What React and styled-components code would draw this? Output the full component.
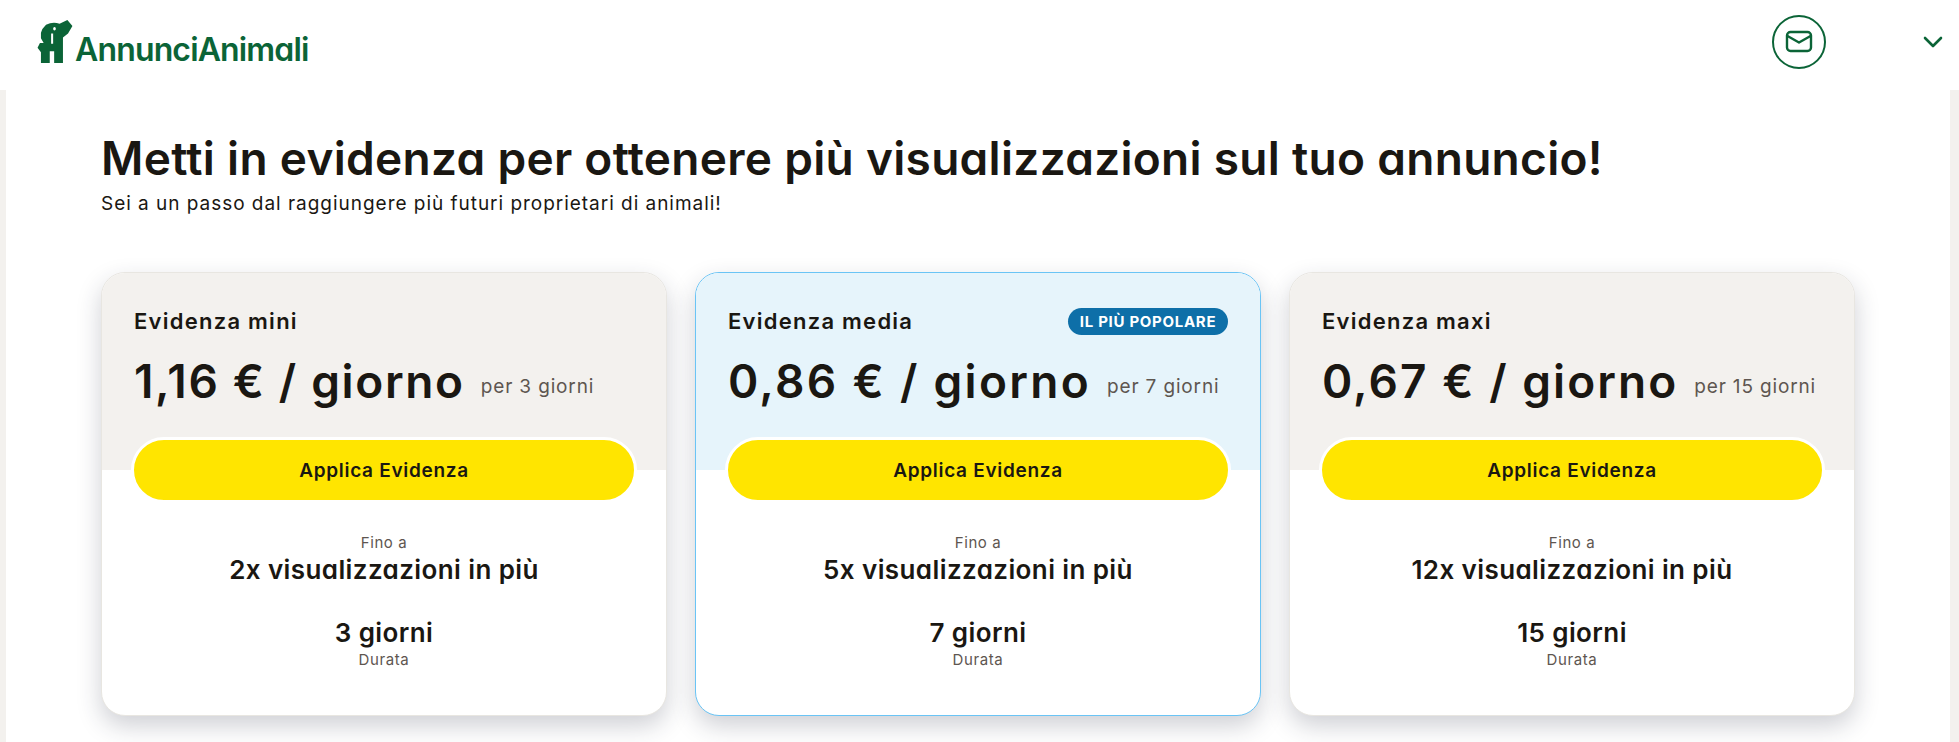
import React from "react";
import styled, { createGlobalStyle } from "styled-components";

const Global = createGlobalStyle`
  html, body { margin: 0; padding: 0; background: #f3f1ee; }
  body { font-family: Inter, "Liberation Sans", sans-serif; color: #1a1712; }
  * { box-sizing: border-box; }
`;
const Page = styled.div`
  height: 742px;
  overflow: hidden;
  background: #f3f1ee;
`;
const Header = styled.header`
  height: 90px;
  background: #fff;
  display: flex;
  align-items: center;
  padding: 0 15px 0 37px;
`;
const Logo = styled.div`
  display: flex;
  align-items: flex-end;
  gap: 2px;
  margin-top: -6px;
`;
const LogoMark = styled.svg`
  display: block;
  width: 36px;
  height: 43px;
  margin-bottom: 1px;
`;
const LogoText = styled.span`
  font-family: Inter, sans-serif;
  font-feature-settings: "cv11";
  font-weight: 600;
  font-size: 32px;
  line-height: 30px;
  letter-spacing: -0.85px;
  color: #0b6437;
  margin-bottom: -1px;
`;
const HeaderActions = styled.div`
  margin-left: auto;
  margin-top: -6px;
  display: flex;
  align-items: center;
  gap: 96px;
`;
const MailButton = styled.div`
  width: 54px;
  height: 54px;
  border-radius: 50%;
  border: 2px solid #0b6437;
  display: flex;
  align-items: center;
  justify-content: center;
  color: #0b6437;
`;
const Chevron = styled.svg`
  display: block;
  width: 22px;
  height: 14px;
`;
const Main = styled.main`
  margin: 0 9px 0 6px;
  height: 652px;
  background: #fff;
  padding: 40px 89px 0 95px;
`;
const Title = styled.h1`
  margin: 0;
  font-family: Inter, sans-serif;
  font-feature-settings: "cv11";
  font-weight: 600;
  font-size: 46px;
  line-height: 56px;
  letter-spacing: 0.3px;
`;
const Subtitle = styled.p`
  margin: 4px 0 0;
  font-size: 19px;
  line-height: 28px;
  letter-spacing: 0.97px;
`;
const Cards = styled.div`
  display: grid;
  grid-template-columns: repeat(3, 566px);
  gap: 28px;
  margin-top: 54px;
`;
const Card = styled.article`
  height: 444px;
  border-radius: 24px;
  background: #fff;
  border: 1px solid ${p => (p.$popular ? "#6ac4f5" : "#e8e6e1")};
  box-shadow: 0 10px 24px rgba(35, 40, 65, 0.22);
  overflow: hidden;
`;
const CardHead = styled.div`
  height: 197px;
  padding: 32px 32px 0;
  background: ${p => (p.$popular ? "#e6f4fb" : "#f3f1ee")};
`;
const PlanRow = styled.div`
  display: flex;
  align-items: center;
  justify-content: space-between;
  height: 32px;
`;
const PlanName = styled.h2`
  margin: 0;
  font-size: 22px;
  font-weight: 600;
  line-height: 32px;
  letter-spacing: 1.25px;
`;
const Badge = styled.span`
  height: 27px;
  width: 160px;
  border-radius: 14px;
  background: #0e6fa8;
  color: #fff;
  font-size: 15px;
  font-weight: 700;
  letter-spacing: 0.7px;
  display: flex;
  align-items: center;
  justify-content: center;
`;
const PriceRow = styled.div`
  display: flex;
  align-items: flex-start;
  gap: 16px;
  margin-top: 16px;
  height: 56px;
`;
const Price = styled.span`
  font-family: Inter, sans-serif;
  font-feature-settings: "cv11";
  font-weight: 600;
  font-size: 46px;
  line-height: 56px;
  letter-spacing: ${p => p.$spacing}px;
`;
const PriceNote = styled.span`
  margin-top: 22px;
  font-size: 19px;
  line-height: 24px;
  color: #5e5650;
  letter-spacing: 0.85px;
`;
const ApplyButton = styled.button`
  display: block;
  width: 506px;
  height: 66px;
  margin: -33px auto 0;
  position: relative;
  border: 3px solid #fff;
  border-radius: 33px;
  background: #ffe500;
  color: #1a1712;
  font-family: Inter, sans-serif;
  font-size: 19px;
  font-weight: 600;
  letter-spacing: 0.7px;
`;
const Details = styled.div`
  display: flex;
  flex-direction: column;
  align-items: center;
  padding-top: 30px;
`;
const Small = styled.span`
  font-size: 15px;
  line-height: 20px;
  color: #5e5650;
  letter-spacing: 0.6px;
`;
const Big = styled.span`
  font-family: Inter, sans-serif;
  font-feature-settings: "cv11";
  font-weight: 600;
  font-size: 26px;
  line-height: 34px;
  letter-spacing: 0.4px;
  margin-top: ${p => p.$gap || 0}px;
`;

const plans = [
  { name: "Evidenza mini", price: "1,16 € / giorno", spacing: 1.65, note: "per 3 giorni", views: "2x visualizzazioni in più", days: "3 giorni" },
  { name: "Evidenza media", price: "0,86 € / giorno", spacing: 2.3, note: "per 7 giorni", views: "5x visualizzazioni in più", days: "7 giorni", popular: true },
  { name: "Evidenza maxi", price: "0,67 € / giorno", spacing: 2.05, note: "per 15 giorni", views: "12x visualizzazioni in più", days: "15 giorni" },
];

export default function App() {
  return (
    <Page>
      <Global />
      <Header>
        <Logo>
          <LogoMark viewBox="115 60 103 127" aria-hidden="true">
            <path
              fill="#0b6437"
              fillRule="evenodd"
              d="M125 98 Q127 86 140 74 Q160 64 180 71 L203 60 L218 78 L205 100 L190 112 L190 187 L164 187 L164 152 L151 152 L151 187 L125 187 L125 155 L115 142 L122 128 L133 128 L125 114 Z M155 100 L155 130 L161 130 L161 100 Z M161 86 A4 5 0 1 0 169 86 A4 5 0 1 0 161 86 Z"
            />
          </LogoMark>
          <LogoText>AnnunciAnimali</LogoText>
        </Logo>
        <HeaderActions>
          <MailButton>
            <svg width="28" height="24" viewBox="0 0 28 24" fill="none" stroke="currentColor" strokeWidth="2.4" strokeLinecap="round" strokeLinejoin="round" aria-hidden="true">
              <rect x="2" y="2" width="24" height="19" rx="3.5" />
              <path d="M2.5 6 L14 12.5 L25.5 6" />
            </svg>
          </MailButton>
          <Chevron viewBox="0 0 22 14" fill="none" stroke="#0b6437" strokeWidth="2.6" strokeLinecap="round" strokeLinejoin="round" aria-hidden="true">
            <path d="M3 3 L11 11 L19 3" />
          </Chevron>
        </HeaderActions>
      </Header>
      <Main>
        <Title>Metti in evidenza per ottenere più visualizzazioni sul tuo annuncio!</Title>
        <Subtitle>Sei a un passo dal raggiungere più futuri proprietari di animali!</Subtitle>
        <Cards>
          {plans.map(p => (
            <Card key={p.name} $popular={p.popular}>
              <CardHead $popular={p.popular}>
                <PlanRow>
                  <PlanName>{p.name}</PlanName>
                  {p.popular && <Badge>IL PIÙ POPOLARE</Badge>}
                </PlanRow>
                <PriceRow>
                  <Price $spacing={p.spacing}>{p.price}</Price>
                  <PriceNote>{p.note}</PriceNote>
                </PriceRow>
              </CardHead>
              <ApplyButton>Applica Evidenza</ApplyButton>
              <Details>
                <Small>Fino a</Small>
                <Big>{p.views}</Big>
                <Big $gap={29}>{p.days}</Big>
                <Small>Durata</Small>
              </Details>
            </Card>
          ))}
        </Cards>
      </Main>
    </Page>
  );
}
